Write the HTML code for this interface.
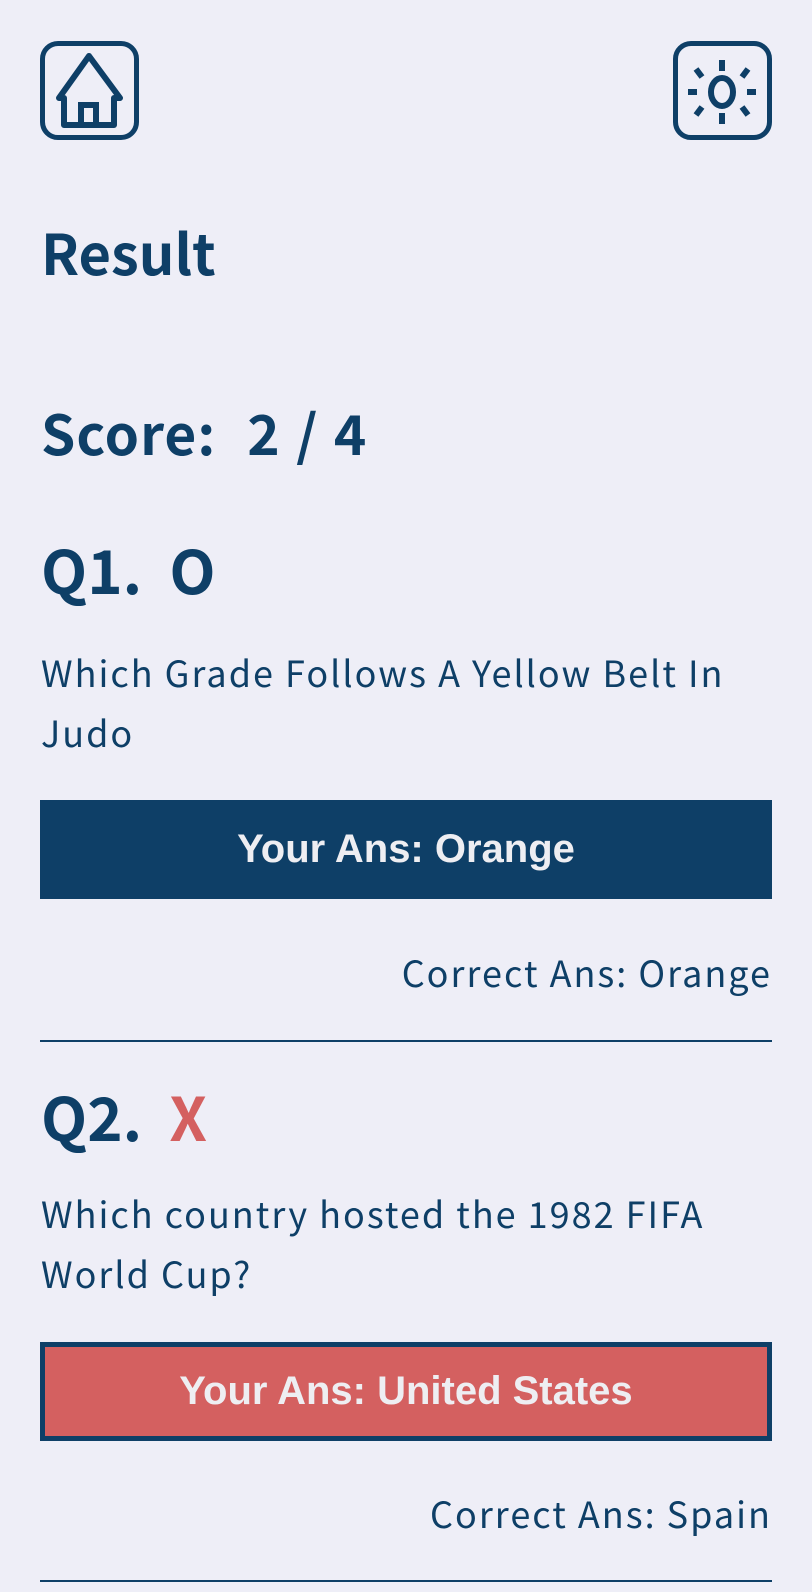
<!DOCTYPE html>
<html><head><meta charset="utf-8"><style>
*{margin:0;padding:0;box-sizing:border-box}
body{width:812px;height:1592px;background:#eeeef7;color:#0e3f67;font-family:"Liberation Sans","Noto Sans CJK KR",sans-serif;position:relative;overflow:hidden}
.box{position:absolute;top:41px;width:99px;height:99px;border:5px solid #0e3f67;border-radius:18px}
.h{position:absolute;left:41px;font-weight:700;font-family:"Noto Sans CJK KR",sans-serif;line-height:1}
.q{position:absolute;left:41px;width:740px;font-size:36px;letter-spacing:2px;line-height:60px;font-family:"Noto Sans CJK KR",sans-serif;font-weight:400}
.btn{position:absolute;left:40px;width:732px;height:99px;background:#0e3f67;color:#eeeef2;font-weight:700;font-size:40px;display:flex;align-items:center;justify-content:center;font-family:"Liberation Sans",Arial,sans-serif}
.ca{position:absolute;right:40px;font-size:36px;letter-spacing:2px;font-family:"Noto Sans CJK KR",sans-serif}
.hr{position:absolute;left:40px;width:732px;height:2px;background:#0e3f67}
</style></head><body>
<div class="box" style="left:40px">
<svg width="89" height="89" viewBox="0 0 89 89" style="position:absolute;left:0;top:0"><path d="M14 52 L44 10 L75 52 L69 52 L69 79 L19 79 L19 52 Z" fill="none" stroke="#0e3f67" stroke-width="6" stroke-linejoin="round"/><path d="M36 79 V59 H51 V79" fill="none" stroke="#0e3f67" stroke-width="6"/></svg>
</div>
<div class="box" style="left:673px">
<svg width="89" height="89" viewBox="0 0 89 89" style="position:absolute;left:0;top:0"><ellipse cx="44" cy="46" rx="11" ry="14" fill="none" stroke="#0e3f67" stroke-width="6"/><g stroke="#0e3f67" stroke-width="6"><path d="M44 14v11M44 67v11M10 46h9M69 46h9M18 23l6 8M70 23l-6 8M18 69l6-8M70 69l-6-8"/></g></svg>
</div>
<div class="h" style="top:224px;font-size:56px">Result</div>
<div class="h" style="top:404px;font-size:55px;letter-spacing:1px;word-spacing:2px">Score:&nbsp; 2 / 4</div>
<div class="h" style="top:539px;font-size:60px">Q1.&nbsp; O</div>
<div class="q" style="top:642px">Which Grade Follows A Yellow Belt In Judo</div>
<div class="btn" style="top:800px">Your Ans: Orange</div>
<div class="ca" style="top:946px">Correct Ans: Orange</div>
<div class="hr" style="top:1040px"></div>
<div class="h" style="top:1086px;font-size:60px">Q2.&nbsp; <span style="color:#d46060">X</span></div>
<div class="q" style="top:1183px">Which country hosted the 1982 FIFA World Cup?</div>
<div class="btn" style="top:1342px;background:#d46060;border:5px solid #0e3f67">Your Ans: United States</div>
<div class="ca" style="top:1487px">Correct Ans: Spain</div>
<div class="hr" style="top:1580px"></div>
</body></html>
